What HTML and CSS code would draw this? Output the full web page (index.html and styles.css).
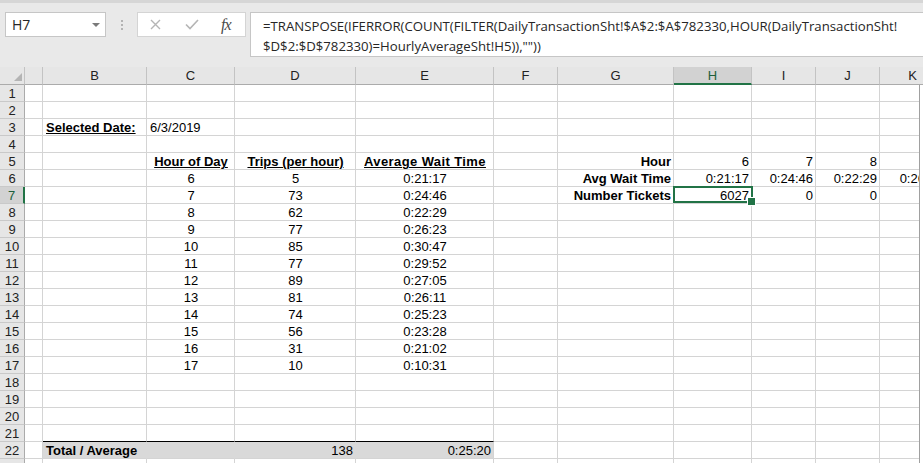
FILE: index.html
```html
<!DOCTYPE html>
<html>
<head>
<meta charset="utf-8">
<link rel="stylesheet" href="styles.css">
</head>
<body>
<div class="toolbar">
  <div class="namebox"><span>H7</span><svg class="caret" width="8" height="4" viewBox="0 0 8 4"><path d="M0 0H8L4 4Z" fill="#7a7a7a"/></svg></div>
  <div class="grip"><svg width="2" height="10" viewBox="0 0 2 10"><rect x="0" y="0" width="2" height="2" fill="#b3b3b3"/><rect x="0" y="4" width="2" height="2" fill="#b3b3b3"/><rect x="0" y="8" width="2" height="2" fill="#b3b3b3"/></svg></div>
  <div class="fxbtns">
    <svg class="ic-x" width="11" height="11" viewBox="0 0 11 11"><path d="M1 1L10 10M10 1L1 10" stroke="#b5b5b5" stroke-width="1.4" fill="none"/></svg>
    <svg class="ic-ok" width="14" height="11" viewBox="0 0 14 11"><path d="M1 5.5L5 9.5L13 1" stroke="#b5b5b5" stroke-width="1.6" fill="none"/></svg>
    <span class="fx">fx</span>
  </div>
  <div class="formula">=TRANSPOSE(IFERROR(COUNT(FILTER(DailyTransactionSht!$A$2:$A$782330,HOUR(DailyTransactionSht!<br>$D$2:$D$782330)=HourlyAverageSht!H5)),""))</div>
</div>
<div class="sheet">
  <div class="clip">
    <div class="grid">
      <div class="hd corner"><svg width="8" height="8" viewBox="0 0 8 8"><path d="M8 0V8H0Z" fill="#b4b4b4"/></svg></div><div class="hd"></div><div class="hd">B</div><div class="hd">C</div><div class="hd">D</div><div class="hd">E</div><div class="hd">F</div><div class="hd">G</div><div class="hd sel">H</div><div class="hd">I</div><div class="hd">J</div><div class="hd">K</div>

      <div class="rh">1</div><div class="c"></div><div class="c"></div><div class="c"></div><div class="c"></div><div class="c"></div><div class="c"></div><div class="c"></div><div class="c"></div><div class="c"></div><div class="c"></div><div class="c"></div>
      <div class="rh">2</div><div class="c"></div><div class="c"></div><div class="c"></div><div class="c"></div><div class="c"></div><div class="c"></div><div class="c"></div><div class="c"></div><div class="c"></div><div class="c"></div><div class="c"></div>
      <div class="rh">3</div><div class="c"></div><div class="c b u">Selected Date:</div><div class="c">6/3/2019</div><div class="c"></div><div class="c"></div><div class="c"></div><div class="c"></div><div class="c"></div><div class="c"></div><div class="c"></div><div class="c"></div>
      <div class="rh">4</div><div class="c"></div><div class="c"></div><div class="c"></div><div class="c"></div><div class="c"></div><div class="c"></div><div class="c"></div><div class="c"></div><div class="c"></div><div class="c"></div><div class="c"></div>
      <div class="rh">5</div><div class="c"></div><div class="c"></div><div class="c ctr b u">Hour of Day</div><div class="c ctr b u">Trips (per hour)</div><div class="c ctr b u wide">Average Wait Time</div><div class="c"></div><div class="c rt b">Hour</div><div class="c rt">6</div><div class="c rt">7</div><div class="c rt">8</div><div class="c rt">9</div>
      <div class="rh">6</div><div class="c"></div><div class="c"></div><div class="c ctr">6</div><div class="c ctr">5</div><div class="c ctr">0:21:17</div><div class="c"></div><div class="c rt b">Avg Wait Time</div><div class="c rt">0:21:17</div><div class="c rt">0:24:46</div><div class="c rt">0:22:29</div><div class="c rt">0:26:23</div>
      <div class="rh sel">7</div><div class="c"></div><div class="c"></div><div class="c ctr">7</div><div class="c ctr">73</div><div class="c ctr">0:24:46</div><div class="c"></div><div class="c rt b">Number Tickets</div><div class="c rt active">6027</div><div class="c rt">0</div><div class="c rt">0</div><div class="c rt">0</div>
      <div class="rh">8</div><div class="c"></div><div class="c"></div><div class="c ctr">8</div><div class="c ctr">62</div><div class="c ctr">0:22:29</div><div class="c"></div><div class="c"></div><div class="c"></div><div class="c"></div><div class="c"></div><div class="c"></div>
      <div class="rh">9</div><div class="c"></div><div class="c"></div><div class="c ctr">9</div><div class="c ctr">77</div><div class="c ctr">0:26:23</div><div class="c"></div><div class="c"></div><div class="c"></div><div class="c"></div><div class="c"></div><div class="c"></div>
      <div class="rh">10</div><div class="c"></div><div class="c"></div><div class="c ctr">10</div><div class="c ctr">85</div><div class="c ctr">0:30:47</div><div class="c"></div><div class="c"></div><div class="c"></div><div class="c"></div><div class="c"></div><div class="c"></div>
      <div class="rh">11</div><div class="c"></div><div class="c"></div><div class="c ctr">11</div><div class="c ctr">77</div><div class="c ctr">0:29:52</div><div class="c"></div><div class="c"></div><div class="c"></div><div class="c"></div><div class="c"></div><div class="c"></div>
      <div class="rh">12</div><div class="c"></div><div class="c"></div><div class="c ctr">12</div><div class="c ctr">89</div><div class="c ctr">0:27:05</div><div class="c"></div><div class="c"></div><div class="c"></div><div class="c"></div><div class="c"></div><div class="c"></div>
      <div class="rh">13</div><div class="c"></div><div class="c"></div><div class="c ctr">13</div><div class="c ctr">81</div><div class="c ctr">0:26:11</div><div class="c"></div><div class="c"></div><div class="c"></div><div class="c"></div><div class="c"></div><div class="c"></div>
      <div class="rh">14</div><div class="c"></div><div class="c"></div><div class="c ctr">14</div><div class="c ctr">74</div><div class="c ctr">0:25:23</div><div class="c"></div><div class="c"></div><div class="c"></div><div class="c"></div><div class="c"></div><div class="c"></div>
      <div class="rh">15</div><div class="c"></div><div class="c"></div><div class="c ctr">15</div><div class="c ctr">56</div><div class="c ctr">0:23:28</div><div class="c"></div><div class="c"></div><div class="c"></div><div class="c"></div><div class="c"></div><div class="c"></div>
      <div class="rh">16</div><div class="c"></div><div class="c"></div><div class="c ctr">16</div><div class="c ctr">31</div><div class="c ctr">0:21:02</div><div class="c"></div><div class="c"></div><div class="c"></div><div class="c"></div><div class="c"></div><div class="c"></div>
      <div class="rh">17</div><div class="c"></div><div class="c"></div><div class="c ctr">17</div><div class="c ctr">10</div><div class="c ctr">0:10:31</div><div class="c"></div><div class="c"></div><div class="c"></div><div class="c"></div><div class="c"></div><div class="c"></div>
      <div class="rh">18</div><div class="c"></div><div class="c"></div><div class="c"></div><div class="c"></div><div class="c"></div><div class="c"></div><div class="c"></div><div class="c"></div><div class="c"></div><div class="c"></div><div class="c"></div>
      <div class="rh">19</div><div class="c"></div><div class="c"></div><div class="c"></div><div class="c"></div><div class="c"></div><div class="c"></div><div class="c"></div><div class="c"></div><div class="c"></div><div class="c"></div><div class="c"></div>
      <div class="rh">20</div><div class="c"></div><div class="c"></div><div class="c"></div><div class="c"></div><div class="c"></div><div class="c"></div><div class="c"></div><div class="c"></div><div class="c"></div><div class="c"></div><div class="c"></div>
      <div class="rh">21</div><div class="c"></div><div class="c top-of-total"></div><div class="c top-of-total"></div><div class="c top-of-total"></div><div class="c top-of-total"></div><div class="c"></div><div class="c"></div><div class="c"></div><div class="c"></div><div class="c"></div><div class="c"></div>
      <div class="rh">22</div><div class="c"></div><div class="c tot b">Total / Average</div><div class="c tot"></div><div class="c tot rt">138</div><div class="c tot tot-end rt">0:25:20</div><div class="c"></div><div class="c"></div><div class="c"></div><div class="c"></div><div class="c"></div><div class="c"></div>
      <div class="rh">23</div><div class="c"></div><div class="c"></div><div class="c"></div><div class="c"></div><div class="c"></div><div class="c"></div><div class="c"></div><div class="c"></div><div class="c"></div><div class="c"></div><div class="c"></div>
    </div>
  </div>
  <div class="edge">
    <div class="edge-hd"></div>
    <div class="edge-body"></div>
  </div>
</div>
</body>
</html>
```

FILE: styles.css
```css
* { box-sizing: border-box; }

body {
  margin: 0;
  background: #ffffff;
  font-family: "Liberation Sans", Arial, sans-serif;
  overflow: hidden;
  width: 923px;
  height: 463px;
}

/* ---------- formula bar ---------- */
.toolbar {
  height: 67px;
  background: #e9e9e9;
  border-top: 3px solid #d6d6d6;
  display: flex;
  align-items: flex-start;
  padding: 9px 0 0 5px;
}

.namebox {
  width: 101px;
  height: 25px;
  background: #ffffff;
  border: 1px solid #c6c6c6;
  display: flex;
  align-items: center;
  justify-content: space-between;
  padding: 0 5px 0 6px;
  font-family: "Open Sans", "Noto Sans", sans-serif;
  font-size: 14px;
  color: #262626;
}

.grip {
  width: 31px;
  height: 25px;
  display: flex;
  align-items: center;
  justify-content: center;
}

.fxbtns {
  width: 109px;
  height: 25px;
  background: #ffffff;
  border: 1px solid #d4d4d4;
  display: flex;
  align-items: center;
  padding-left: 12px;
}

.ic-ok { margin-left: 24px; }

.fx {
  margin-left: 22px;
  font-family: "Liberation Serif", serif;
  font-style: italic;
  font-size: 16px;
  color: #4a4a4a;
  letter-spacing: -1px;
}

.formula {
  flex: 1;
  height: 45px;
  margin-left: 4px;
  margin-right: -3px;
  background: #ffffff;
  border: 1px solid #c6c6c6;
  padding: 3px 0 0 12px;
  font-family: "Open Sans", "Noto Sans", sans-serif;
  font-size: 13.2px;
  line-height: 20px;
  color: #262626;
  white-space: nowrap;
  overflow: hidden;
}

/* ---------- sheet ---------- */
.sheet {
  display: flex;
  height: 396px;
}

.clip {
  width: 919px;
  flex: none;
  overflow: hidden;
}

.grid {
  display: grid;
  grid-template-columns: 25px 18px 104px 88px 121px 138px 64px 116px 78px 64px 64px 66px;
  grid-template-rows: 18px;
  grid-auto-rows: 17px;
  width: 946px;
  font-size: 13px;
}

.edge {
  flex: 1;
  display: flex;
  flex-direction: column;
}

.edge-hd {
  height: 18px;
  background: #e6e6e6;
  border-bottom: 1px solid #ababab;
}

.edge-body {
  flex: 1;
  border-left: 1px solid #a0a0a0;
}

.hd {
  background: #e6e6e6;
  border-right: 1px solid #c3c3c3;
  border-bottom: 1px solid #ababab;
  text-align: center;
  line-height: 18px;
  color: #222222;
}

.hd.sel {
  background: #d2d2d2;
  color: #1d5f3a;
  border-bottom: 2px solid #217346;
}

.corner {
  display: flex;
  justify-content: flex-end;
  align-items: flex-end;
  padding: 0 2px 3px 0;
}

.rh {
  background: #e6e6e6;
  border-right: 1px solid #ababab;
  border-bottom: 1px solid #c9c9c9;
  text-align: center;
  line-height: 17px;
  color: #222222;
}

.rh.sel {
  background: #d2d2d2;
  color: #1d5f3a;
  border-right: 2px solid #217346;
}

.c {
  border-right: 1px solid #d4d4d4;
  border-bottom: 1px solid #d4d4d4;
  line-height: 17px;
  padding: 0 2px 0 3px;
  white-space: nowrap;
  overflow: hidden;
  color: #000000;
}

.ctr { text-align: center; }
.rt { text-align: right; }
.b { font-weight: bold; }
.u { text-decoration: underline; text-decoration-thickness: 1px; }
.wide { letter-spacing: 0.4px; }

.top-of-total { border-bottom-color: #000000; }

.tot {
  background: #d9d9d9;
  border-right-color: #d9d9d9;
}

.tot-end { border-right-color: #d4d4d4; }

.active {
  position: relative;
  overflow: visible;
}

.active::after {
  content: "";
  position: absolute;
  left: -1px;
  top: -1px;
  right: -2px;
  bottom: 0;
  border: 2px solid #217346;
}

.active::before {
  content: "";
  position: absolute;
  right: -5px;
  bottom: -3px;
  width: 7px;
  height: 7px;
  background: #217346;
  border: 1px solid #ffffff;
  z-index: 1;
}
```
